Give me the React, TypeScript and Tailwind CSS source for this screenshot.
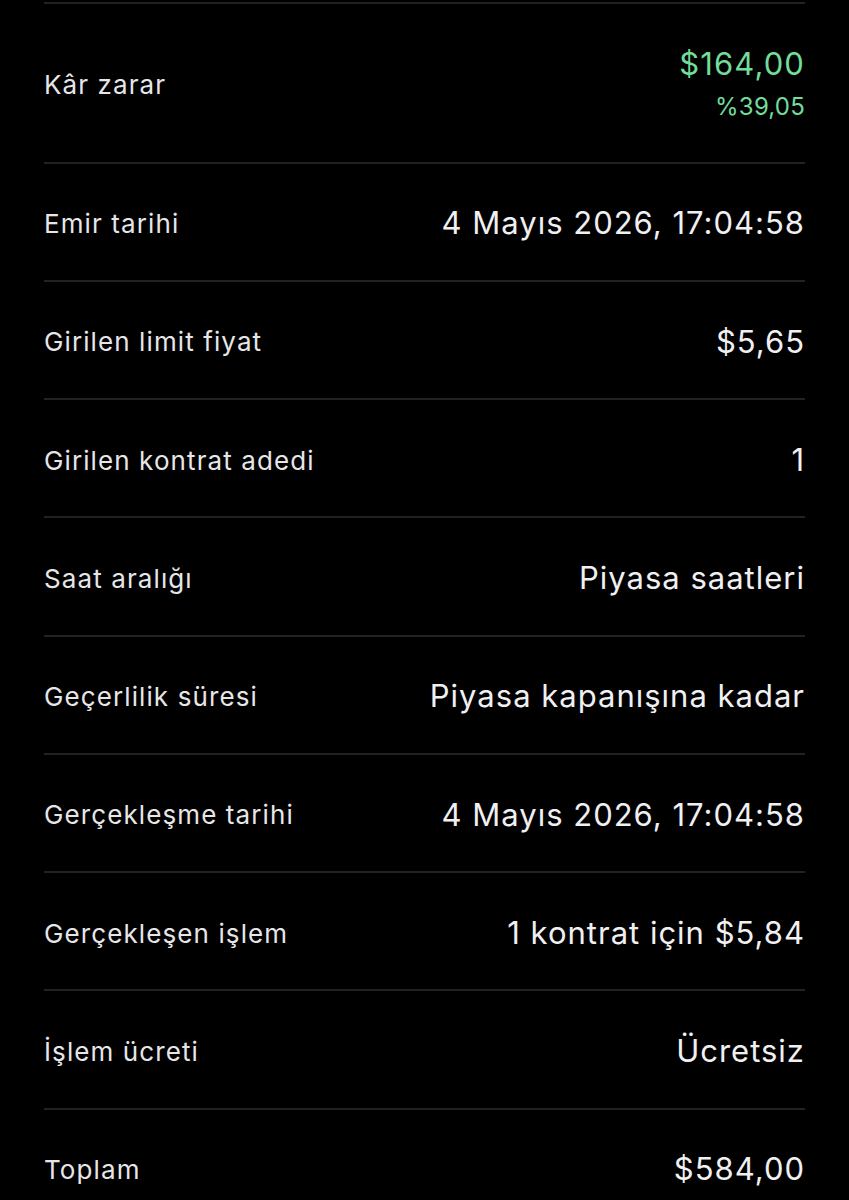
const rows: [string, string][] = [
  ['Emir tarihi', '4 Mayıs 2026, 17:04:58'],
  ['Girilen limit fiyat', '$5,65'],
  ['Girilen kontrat adedi', '1'],
  ['Saat aralığı', 'Piyasa saatleri'],
  ['Geçerlilik süresi', 'Piyasa kapanışına kadar'],
  ['Gerçekleşme tarihi', '4 Mayıs 2026, 17:04:58'],
  ['Gerçekleşen işlem', '1 kontrat için $5,84'],
  ['İşlem ücreti', 'Ücretsiz'],
  ['Toplam', '$584,00'],
];

export default function App() {
  return (
    <div className="min-h-[1200px] bg-black px-[44px] pt-[2px] font-['Inter',sans-serif]">
      <div className="flex h-[159.5px] items-center justify-between border-t-2 border-[#222226]">
        <span className="mt-[4px] text-[26px] tracking-[1.1px] text-[#e6e6e8]">Kâr zarar</span>
        <div className="flex flex-col items-end">
          <span className="text-[31px] leading-[40px] tracking-[1.1px] text-[#72dc9b]">$164,00</span>
          <span className="mt-[8px] text-[24px] leading-[30px] tracking-[0.2px] text-[#72dc9b]">%39,05</span>
        </div>
      </div>
      {rows.map(([label, value]) => (
        <div
          key={label}
          className="flex h-[118.25px] items-center justify-between border-t-2 border-[#222226]"
        >
          <span className="mt-[4px] text-[26px] tracking-[1.1px] text-[#e6e6e8]">{label}</span>
          <span className="mt-[4px] text-[31px] tracking-[1px] text-[#f0f0f2]">{value}</span>
        </div>
      ))}
    </div>
  );
}
